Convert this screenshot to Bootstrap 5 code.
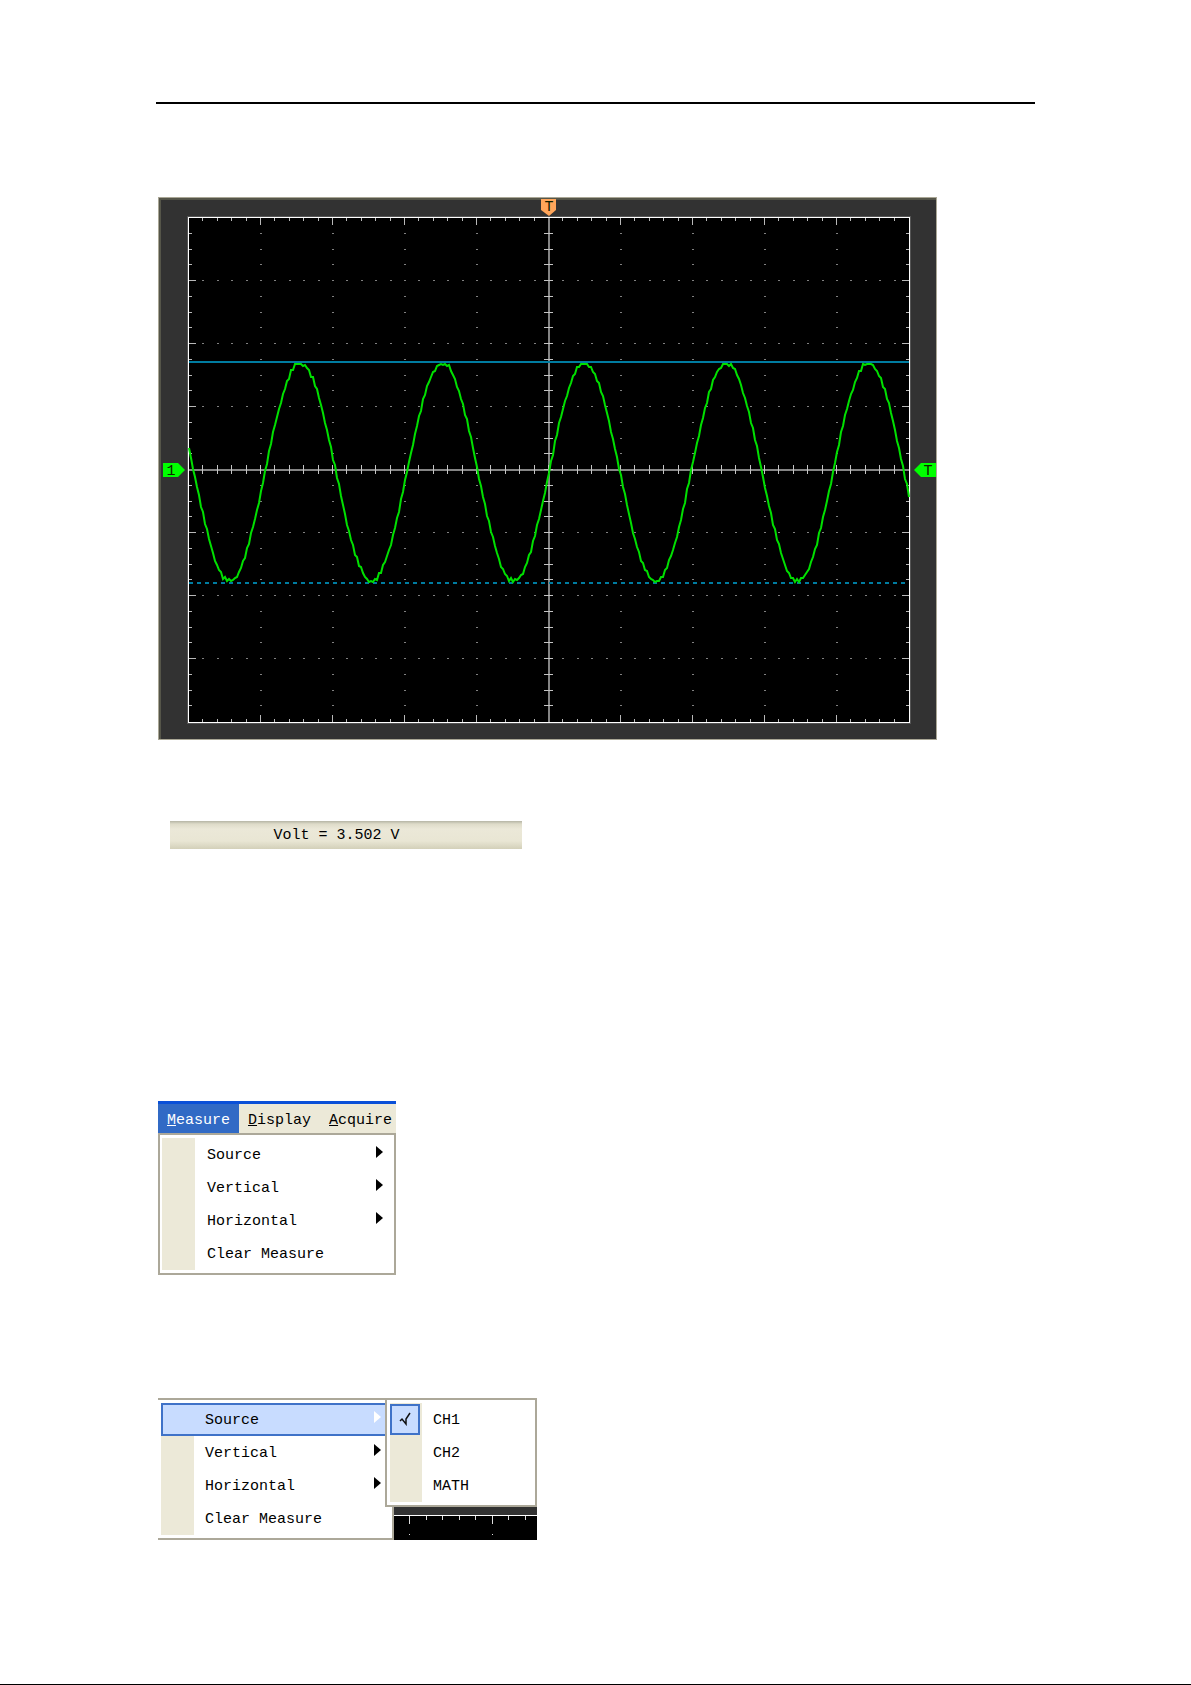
<!DOCTYPE html>
<html lang="en">
<head>
<meta charset="utf-8">
<meta name="viewport" content="width=device-width, initial-scale=1">
<title>Voltage measurement</title>
<link href="https://cdn.jsdelivr.net/npm/bootstrap@5.3.0/dist/css/bootstrap.min.css" rel="stylesheet">
<style>
  body { background: #fff; color: #000; }
  .sheet { max-width: 911px; padding: 102px 16px 0; }
  .sheet-rule { height: 2px; background: #000; margin-bottom: 93px; }
  .figures { padding-left: 2px; }
  .ui-text { font-family: "Liberation Mono", "DejaVu Sans Mono", monospace; font-size: 15px; line-height: 20px; white-space: nowrap; color: #000; }
  .scope { width: 100%; max-width: 779px; height: auto; margin-bottom: 81px; }
  .readout { width: 352px; height: 28px; margin: 0 0 252px 12px; padding: 2px 19px 0 0; background: linear-gradient(#b5b5a5, #dedbc9 3px, #ebe8d8 8px, #e9e6d4 20px, #d3d0b9); }
  .menu-shot { width: 238px; margin-bottom: 123px; }
  .menu-strip { height: 32px; border-top: 3px solid #0a50d8; background: #ece9d8; overflow: hidden; }
  .menu-strip button { border: 0; background: none; padding: 5px 9px 0; }
  .menu-strip button.active { background: #316ac5; color: #fff; }
  .menu-strip button:last-child { padding-right: 0; }
  .menu-panel { background: #fff; border: 2px solid #aca899; padding: 3px 2px; }
  .menu-panel button { display: flex; align-items: center; width: 100%; height: 33px; padding: 3px 9px 0 45px; border: 0; text-align: left; background: linear-gradient(90deg, #ece9d8 33px, #fff 33px); }
  .menu-panel button svg { margin: 0 0 8px auto; }
  .cascade { width: 379px; height: 142px; overflow: hidden; }
  .cascade .parent-menu { width: 236px; height: 142px; border-left: 0; padding-left: 3px; }
  .cascade .parent-menu button { padding-left: 44px; }
  .cascade .parent-menu button.active { background: #c8dcff; border: 2px solid #3f72c8; padding-left: 42px; padding-right: 7px; }
  .cascade .submenu { left: 227px; top: 0; width: 152px; height: 109px; padding: 3px; }
  .cascade .submenu label { display: flex; align-items: center; height: 33px; padding: 2px 0 0 43px; background: linear-gradient(90deg, #ece9d8 32px, #fff 32px); }
  .cascade .submenu input { appearance: none; width: 30px; height: 31px; margin: 0 13px 2px -43px; }
  .cascade .submenu input:checked { border: 2px solid #3f72c8; background: #c8dcff; }
  .tick-mark { left: 9px; top: 9px; pointer-events: none; }
  .page-edge { height: 1px; background: #000; }
</style>
</head>
<body class="d-flex flex-column min-vh-100">
<main class="sheet w-100 mx-auto">
  <div class="sheet-rule"></div>
  <div class="figures d-flex flex-column align-items-start">
    <svg class="scope d-block" viewBox="0 0 779 543" role="img" aria-label="Oscilloscope trace">
      <rect width="779" height="543" fill="#aaa796"/>
      <rect x="1" y="1" width="777" height="541" fill="#555549"/>
      <rect x="3" y="3" width="775" height="539" fill="#323232"/>
      <rect x="29" y="19" width="724" height="508" fill="#555"/>
      <rect x="30" y="20" width="722" height="506" fill="#fff"/>
      <rect x="31" y="21" width="720" height="504" fill="#000"/>
      <g shape-rendering="crispEdges">
        <path id="dots" fill="#808080"/>
        <path id="ticks" fill="#b8b8b8"/>
        <path d="M31 272h720v2H31zM390 21h2v504h-2z" fill="#858585"/>
        <path id="crossTicks" fill="#c4c4c4"/>
        <path d="M31 165h720" stroke="#007ca0" stroke-width="2"/>
        <path d="M31 386h720" stroke="#007ca0" stroke-width="2" stroke-dasharray="4 4"/>
      </g>
      <path id="wave" fill="none" stroke="#00e000" stroke-width="2"/>
      <path d="M383 2h15v11l-7 6l-8-6z" fill="#ffa55a"/>
      <path d="M5 266h15l7 7l-7 7H5z" fill="#00ff00"/>
      <path d="M778 266h-15l-7 7l7 7h15z" fill="#00ff00"/>
      <g font-family="Liberation Mono, monospace" font-size="15" text-anchor="middle" fill="#102000">
        <text x="391" y="14">T</text>
        <text x="13" y="278">1</text>
        <text x="770" y="278">T</text>
      </g>
    </svg>

    <div class="readout ui-text d-flex align-items-center justify-content-center">Volt = 3.502 V</div>

    <div class="menu-shot">
      <nav class="menu-strip d-flex" aria-label="Main menu">
        <button class="ui-text active"><u>M</u>easure</button>
        <button class="ui-text"><u>D</u>isplay</button>
        <button class="ui-text"><u>A</u>cquire</button>
      </nav>
      <div class="menu-panel">
        <button class="ui-text">Source<svg width="7" height="12"><path d="M0 0v12l7-6z"/></svg></button>
        <button class="ui-text">Vertical<svg width="7" height="12"><path d="M0 0v12l7-6z"/></svg></button>
        <button class="ui-text">Horizontal<svg width="7" height="12"><path d="M0 0v12l7-6z"/></svg></button>
        <button class="ui-text">Clear Measure</button>
      </div>
    </div>

    <div class="cascade position-relative d-flex">
      <div class="menu-panel parent-menu flex-shrink-0">
        <button class="ui-text active">Source<svg width="7" height="12"><path d="M0 0v12l7-6z" fill="#fff"/></svg></button>
        <button class="ui-text">Vertical<svg width="7" height="12"><path d="M0 0v12l7-6z"/></svg></button>
        <button class="ui-text">Horizontal<svg width="7" height="12"><path d="M0 0v12l7-6z"/></svg></button>
        <button class="ui-text">Clear Measure</button>
      </div>
      <svg class="align-self-end flex-shrink-0" width="143" height="34" shape-rendering="crispEdges" aria-hidden="true">
        <path d="M0 0h143v34H0z"/>
        <path d="M0 0h143v9H0z" fill="#323232"/>
        <path d="M0 9h143v1H0z" fill="#fff"/>
        <path d="M15 10h1v8h-1zM98 10h1v8h-1zM32 10h1v4h-1zM48 10h1v4h-1zM65 10h1v4h-1zM81 10h1v4h-1zM114 10h1v4h-1zM131 10h1v4h-1zM15 28h1v1h-1zM98 28h1v1h-1z" fill="#ddd"/>
      </svg>
      <div class="menu-panel submenu position-absolute">
        <label class="ui-text position-relative"><input type="radio" name="source" checked><svg class="tick-mark position-absolute" width="13" height="14"><path d="M1 9l2-2l4 5V7l4-6" fill="none" stroke="#111" stroke-width="1.500"/></svg>CH1</label>
        <label class="ui-text"><input type="radio" name="source">CH2</label>
        <label class="ui-text"><input type="radio" name="source">MATH</label>
      </div>
    </div>
  </div>
</main>
<div class="page-edge mt-auto"></div>

<script>
  // Graticule: 10 x 8 divisions, five steps per division across and four down
  const cx = 391, cy = 273, divX = 72, divY = 63;
  const box = (x, y, w, h) => `M${Math.round(x)} ${Math.round(y)}h${w}v${h}h${-w}z`;
  let dots = '', ticks = '', cross = '';
  for (let i = -24; i <= 24; i++) {
    const x = cx + i * divX / 5, len = i % 5 === 0 ? 7 : 3;
    ticks += box(x - 1, 21, 1, len) + box(x - 1, 525 - len, 1, len);
    cross += box(x - 1, 268, 1, 9);
    for (let j = -3; j <= 3; j++) if (j) dots += box(x - 1, cy + j * divY - 1, 2, 1);
  }
  for (let j = -15; j <= 15; j++) {
    const y = cy + j * divY / 4, len = j % 4 === 0 ? 7 : 3;
    ticks += box(31, y - 1, len, 1) + box(751 - len, y - 1, len, 1);
    cross += box(386, y - 1, 9, 1);
    for (let i = -4; i <= 4; i++) if (i) dots += box(cx + i * divX - 1, y - 1, 2, 1);
  }
  document.getElementById('dots').setAttribute('d', dots);
  document.getElementById('ticks').setAttribute('d', ticks);
  document.getElementById('crossTicks').setAttribute('d', cross);

  // Sampled sine with a little acquisition noise
  const noise = [0, 1, -1, 2, 0, -2, 1, 0, -2, 2, 0];
  let wave = '';
  for (let x = 31, n = 0; x <= 751; x += 2, n++) {
    const y = 275 - 109 * Math.sin((x - 391) * 2 * Math.PI / 142) + noise[n * 7 % 11];
    wave += (n ? 'L' : 'M') + x + ' ' + Math.max(167, Math.min(385, Math.round(y)));
  }
  document.getElementById('wave').setAttribute('d', wave);
</script>
<script src="https://cdn.jsdelivr.net/npm/bootstrap@5.3.0/dist/js/bootstrap.bundle.min.js"></script>
</body>
</html>
